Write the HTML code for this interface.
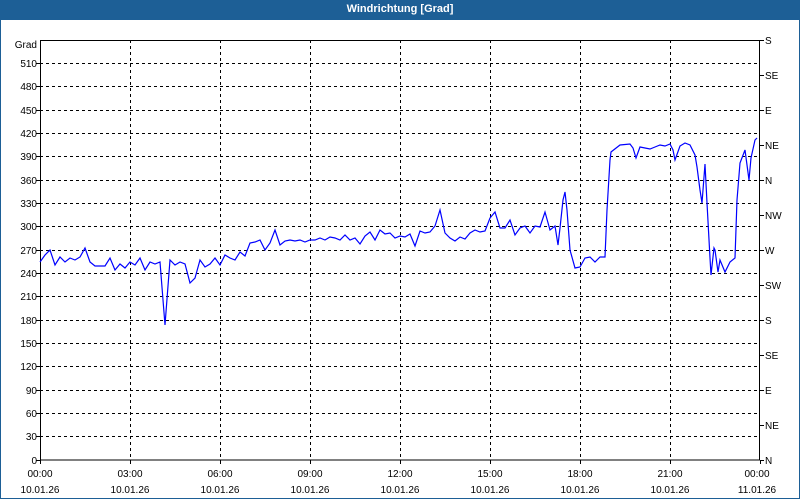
<!DOCTYPE html>
<html><head><style>
body{margin:0;width:800px;height:500px;overflow:hidden;background:#fff;font-family:"Liberation Sans",sans-serif;}
#t{position:absolute;left:0;top:0;width:800px;height:20px;background:#1d5f96;color:#fff;font-size:11px;font-weight:bold;text-align:center;line-height:19px;}
#f{position:absolute;left:0;top:20px;width:798px;height:478px;border:1px solid #1d5f96;border-top:none;}
svg{position:absolute;left:0;top:0;}
text{font-family:"Liberation Sans",sans-serif;font-size:10px;fill:#000;}
</style></head><body>
<div id="t">Windrichtung [Grad]</div><div id="f"></div>
<svg width="800" height="500">
<g stroke="#000" stroke-width="1" stroke-dasharray="3,3" fill="none">
<path d="M130.5 40V460M220.5 40V460M310.5 40V460M400.5 40V460M490.5 40V460M580.5 40V460M670.5 40V460"/>
<path d="M40 63.5H760M40 86.5H760M40 110.5H760M40 133.5H760M40 156.5H760M40 180.5H760M40 203.5H760M40 226.5H760M40 250.5H760M40 273.5H760M40 296.5H760M40 320.5H760M40 343.5H760M40 366.5H760M40 390.5H760M40 413.5H760M40 436.5H760"/>
</g>
<rect x="40.5" y="40.5" width="719" height="419.5" fill="none" stroke="#000"/>
<g stroke="#000"><path d="M40.5 460v4M130.5 460v4M220.5 460v4M310.5 460v4M400.5 460v4M490.5 460v4M580.5 460v4M670.5 460v4M760.5 460v4M36 460.5h4M36 436.5h4M36 413.5h4M36 390.5h4M36 366.5h4M36 343.5h4M36 320.5h4M36 296.5h4M36 273.5h4M36 250.5h4M36 226.5h4M36 203.5h4M36 180.5h4M36 156.5h4M36 133.5h4M36 110.5h4M36 86.5h4M36 63.5h4M760 40.5h4M760 75.5h4M760 110.5h4M760 145.5h4M760 180.5h4M760 215.5h4M760 250.5h4M760 285.5h4M760 320.5h4M760 355.5h4M760 390.5h4M760 425.5h4M760 460.5h4"/></g>
<g text-anchor="end">
<text x="37" y="48">Grad</text><text x="37" y="67">510</text><text x="37" y="90">480</text><text x="37" y="114">450</text><text x="37" y="137">420</text><text x="37" y="160">390</text><text x="37" y="184">360</text><text x="37" y="207">330</text><text x="37" y="230">300</text><text x="37" y="254">270</text><text x="37" y="277">240</text><text x="37" y="300">210</text><text x="37" y="324">180</text><text x="37" y="347">150</text><text x="37" y="370">120</text><text x="37" y="394">90</text><text x="37" y="417">60</text><text x="37" y="440">30</text><text x="37" y="464">0</text>
</g>
<g>
<text x="765" y="44">S</text><text x="765" y="79">SE</text><text x="765" y="114">E</text><text x="765" y="149">NE</text><text x="765" y="184">N</text><text x="765" y="219">NW</text><text x="765" y="254">W</text><text x="765" y="289">SW</text><text x="765" y="324">S</text><text x="765" y="359">SE</text><text x="765" y="394">E</text><text x="765" y="429">NE</text><text x="765" y="464">N</text>
</g>
<g text-anchor="middle">
<text x="40" y="477">00:00</text><text x="130" y="477">03:00</text><text x="220" y="477">06:00</text><text x="310" y="477">09:00</text><text x="400" y="477">12:00</text><text x="490" y="477">15:00</text><text x="580" y="477">18:00</text><text x="670" y="477">21:00</text><text x="757" y="477">00:00</text>
<text x="40" y="493">10.01.26</text><text x="130" y="493">10.01.26</text><text x="220" y="493">10.01.26</text><text x="310" y="493">10.01.26</text><text x="400" y="493">10.01.26</text><text x="490" y="493">10.01.26</text><text x="580" y="493">10.01.26</text><text x="670" y="493">10.01.26</text><text x="757" y="493">11.01.26</text>
</g>
<polyline fill="none" stroke="#0000ff" stroke-width="1.2" points="40,262 45,255 50,250 55,265 60,257 65,262 70,258 75,260 80,257 85,248 90,262 95,266 100,266 105,266 110,258 115,270 120,264 125,268 130,262 135,265 140,258 145,270 150,262 155,264 160,262 163,300 165,325 170,260 175,265 180,262 185,264 190,283 195,278 200,260 205,267 210,264 215,258 220,265 225,255 230,258 235,260 240,252 245,256 250,243 255,242 260,240 265,250 270,243 275,230 280,245 285,241 290,240 295,241 300,240 305,242 310,240 315,240 320,238 325,240 330,237 335,238 340,240 345,235 350,240 355,238 360,244 365,236 370,232 375,240 380,230 385,234 390,233 395,238 400,236 405,237 410,234 415,246 420,231 425,233 430,232 435,226 440,210 445,233 450,238 455,241 460,237 465,239 470,233 475,230 480,232 485,231 490,218 495,212 500,228 505,228 510,220 515,235 520,228 525,226 530,233 535,226 540,227 545,212 550,230 555,226 558,245 560,228 563,200 565,192 567,210 570,250 575,268 580,267 585,258 590,257 595,262 600,257 605,257 607,210 610,160 611,152 620,145 630,144 633,148 636,158 640,147 645,148 650,149 655,147 660,145 665,146 670,144 673,150 675,160 680,146 685,143 690,145 695,155 697,167 700,190 702,203 705,164 707,203 710,258 711,275 714,248 715,250 718,272 720,260 725,272 730,262 735,258 737,200 740,163 745,150 749,180 751,158 755,140 757,138"/>
</svg>
</body></html>
